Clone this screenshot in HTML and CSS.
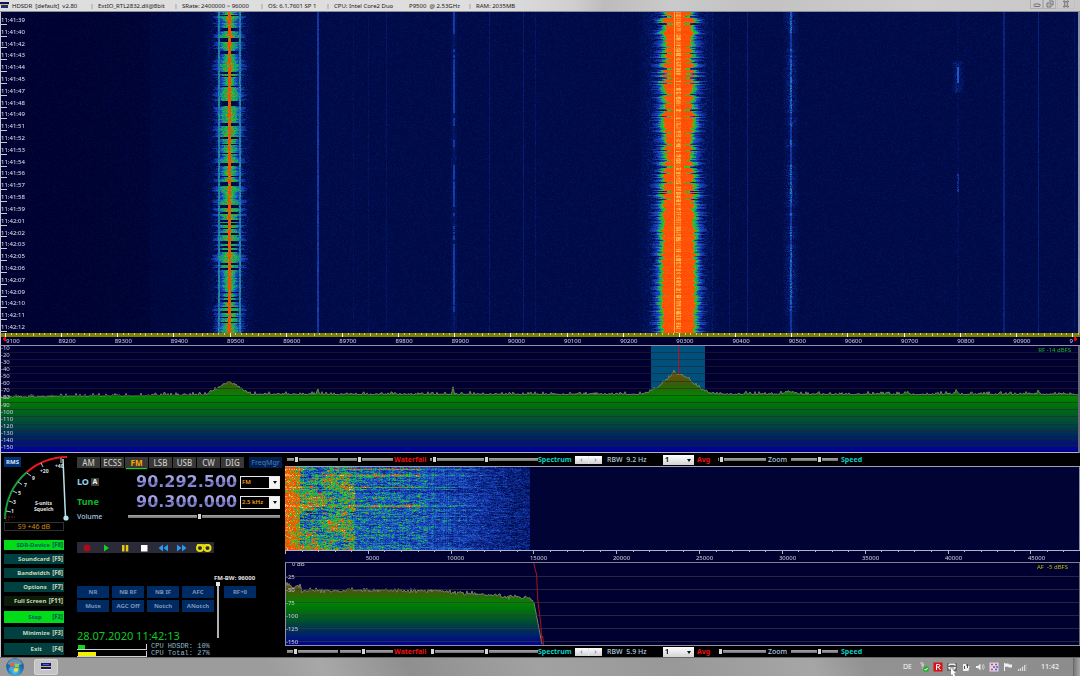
FILE: index.html
```html
<!DOCTYPE html>
<html lang="en">
<head>
<meta charset="utf-8">
<title>HDSDR</title>
<link rel="stylesheet" href="styles.css">
</head>
<body>
<div class="app">
  <header class="titlebar">
    <svg class="app-icon" viewBox="0 0 9 7"><rect width="9" height="3" fill="#101060"/><rect y="2" width="9" height="1" fill="#d8c820"/><rect x="1" y="3" width="7" height="3" fill="#183090"/></svg>
    <span class="t-name">HDSDR&nbsp; [default]&nbsp; v2.80</span><i>|</i>
    <span class="t-ext">ExtIO_RTL2832.dll@8bit</span><i>|</i>
    <span class="t-rate">SRate: 2400000 &gt; 96000</span><i>|</i>
    <span class="t-os">OS: 6.1.7601 SP 1</span><i>|</i>
    <span class="t-cpu">CPU: Intel Core2 Duo</span><span class="t-clk">P9500&nbsp; @ 2.53GHz</span><i>|</i>
    <span>RAM: 2035MB</span>
    <div class="winbtns">
      <button aria-label="Minimize window"><svg viewBox="0 0 8 8"><rect x="1" y="4" width="6" height="2.5" rx="1"/></svg></button>
      <button aria-label="Restore window"><svg viewBox="0 0 8 8"><path d="M3 1h4v4h-1M1 3h4v4h-4zM3 4.5v1"/></svg></button>
      <button aria-label="Close window"><svg viewBox="0 0 8 8"><path d="M1.500 1h1.500l1 1.500 1-1.500h1.500l-1.500 3 1.500 3h-1.500l-1-1.500-1 1.500h-1.500l1.500-3z"/></svg></button>
    </div>
  </header>

  <section class="rf-waterfall stack">
    <canvas id="rfWaterfall"></canvas>
    <ol class="times" id="times"></ol>
  </section>
  <section class="rf-scale stack">
    <canvas id="rfScale"></canvas>
    <div class="rf-labels" id="rfLabels"></div>
  </section>
  <section class="rf-spectrum stack">
    <canvas id="rfSpectrum"></canvas>
    <ol class="db db-rf" id="dbRf"></ol>
    <span class="level rf-level">RF -14 dBFS</span>
  </section>

  <div class="lower">
    <section class="panel">
      <div class="left">
        <div class="meter">
          <button class="rms">RMS</button>
          <svg viewBox="0 0 66 67">
            <path d="M2 64A62 62 0 0 1 24 17" fill="none" stroke="#18a040" stroke-width="2"/>
            <path d="M24 17A62 62 0 0 1 64 2" fill="none" stroke="#f01818" stroke-width="2"/>
            <path d="M3 56l5 1M6 46l4 1.500M10 36l4 2M15 27l4 2.500M24 18l4 3M38 8l2 4M58 3v5" stroke="#c8c8c8" stroke-width="1"/>
            <path d="M2 62h10M2 65h4" stroke="#901010" stroke-dasharray="2 1"/>
            <g class="dial"><text x="8" y="58">1</text><text x="10" y="49">3</text><text x="15" y="40">5</text><text x="21" y="32">7</text><text x="29" y="25">9</text><text x="37" y="18">+20</text><text x="52" y="13">+40</text><text x="32" y="50">S-units</text><text x="31" y="56">Squelch</text></g>
            <path d="M60 4L62.500 63" stroke="#b8e4ec" stroke-width="1.500"/><circle cx="63" cy="63" r="2.600" fill="#b8e4ec"/>
          </svg>
        </div>
        <output class="s-read">S9 +46 dB</output>
        <nav class="menu">
          <button class="on">SDR-Device <b>[F8]</b></button>
          <button>Soundcard <b>[F5]</b></button>
          <button>Bandwidth <b>[F6]</b></button>
          <button>Options <b class="wide">[F7]</b></button>
          <button class="dark">Full Screen <b>[F11]</b></button>
        </nav>
        <nav class="menu tall">
          <button class="on">Stop <b class="wide2">[F2]</b></button>
          <button>Minimize <b>[F3]</b></button>
          <button>Exit <b class="wide2">[F4]</b></button>
        </nav>
      </div>

      <div class="right">
        <div class="modes">
          <button>AM</button><button>ECSS</button><button class="active">FM</button><button>LSB</button><button>USB</button><button>CW</button><button>DIG</button>
          <button class="freqmgr">FreqMgr</button>
        </div>
        <div class="tune-row lo"><span class="t-label">LO <button class="vfo">A</button></span><output class="digits">90.292.500</output>
          <span class="combo"><select aria-label="Mode"><option>FM</option></select></span></div>
        <div class="tune-row tn"><span class="t-label">Tune</span><output class="digits">90.300.000</output>
          <span class="combo"><select aria-label="Step"><option>2.5 kHz</option></select></span></div>
        <div class="volume"><label for="vol">Volume</label><input id="vol" type="range" value="47"></div>
        <div class="transport">
          <button aria-label="Record"><svg viewBox="0 0 12 10"><circle cx="6" cy="5" r="3.600" fill="#a80c18"/></svg></button>
          <button aria-label="Play"><svg viewBox="0 0 12 10"><path d="M4 1.500L9 5l-5 3.500z" fill="#10d020"/></svg></button>
          <button aria-label="Pause"><svg viewBox="0 0 12 10"><path d="M3 2h2.500v6.500H3zM6.800 2h2.500v6.500H6.800z" fill="#e8c810"/></svg></button>
          <button aria-label="Stop playback"><svg viewBox="0 0 12 10"><path d="M3 2h6.500v6.500H3z" fill="#fff"/></svg></button>
          <button aria-label="Rewind"><svg viewBox="0 0 12 10"><path d="M6 1.500v7L1.500 5zM11 1.500v7L6.500 5z" fill="#2898f0"/></svg></button>
          <button aria-label="Forward"><svg viewBox="0 0 12 10"><path d="M1 1.500v7L5.500 5zM6 1.500v7L10.500 5z" fill="#2898f0"/></svg></button>
          <button class="loop" aria-label="Loop"><svg viewBox="0 0 18 10"><g fill="none" stroke="#e8e010" stroke-width="2"><circle cx="5" cy="5" r="3"/><circle cx="12.500" cy="5" r="3"/><path d="M2 2.200h12.500"/></g></svg></button>
        </div>
        <div class="dsp">
          <div class="dsp-main">
            <div class="fn"><button>NR</button><button>NB RF</button><button>NB IF</button><button>AFC</button><button>Mute</button><button>AGC Off</button><button>Notch</button><button>ANotch</button></div>
            <time class="clock">28.07.2020 11:42:13</time>
            <div class="cpu"><span class="bar"><span class="fill g" style="width:10%"></span></span><span>CPU HDSDR: 10%</span></div>
            <div class="cpu"><span class="bar"><span class="fill y" style="width:27%"></span></span><span>CPU Total: 27%</span></div>
          </div>
          <div class="dsp-side">
            <label for="bw">FM-BW: 96000</label>
            <div class="side-row"><input id="bw" class="vert" type="range" value="100"><button>RF+0</button></div>
          </div>
        </div>
      </div>
    </section>

    <section class="af">
      <div class="strip top">
        <input class="s1" aria-label="Waterfall low" type="range" value="16"><input class="s2" aria-label="Waterfall high" type="range" value="36">
        <b class="red wf">Waterfall</b>
        <input class="s3" aria-label="Spectrum low" type="range" value="4"><input class="s4" aria-label="Spectrum high" type="range" value="0">
        <b class="cyan sp">Spectrum</b>
        <span class="spin"><button aria-label="Narrower">‹</button><button aria-label="Wider">›</button></span>
        <span class="rbw">RBW&nbsp; 9.2 Hz</span>
        <span class="avg-box"><select aria-label="Averages RF"><option>1</option></select></span>
        <b class="red av">Avg</b>
        <input class="s5" aria-label="Zoom RF" type="range" value="3"><span class="zm">Zoom</span>
        <input class="s6" aria-label="Speed RF" type="range" value="62"><b class="cyan">Speed</b>
      </div>
      <div class="af-waterfall stack"><canvas id="afWaterfall"></canvas></div>
      <div class="af-scale stack"><canvas id="afScale"></canvas><div class="af-labels" id="afLabels"></div></div>
      <div class="af-spectrum stack">
        <canvas id="afSpectrum"></canvas>
        <ol class="db db-af" id="dbAf"></ol>
        <span class="level af-level">AF&nbsp; -5 dBFS</span>
      </div>
      <div class="strip bottom">
        <input class="s1" aria-label="AF waterfall low" type="range" value="12"><input class="s2" aria-label="AF waterfall high" type="range" value="44">
        <b class="red wf">Waterfall</b>
        <input class="s3" aria-label="AF spectrum low" type="range" value="0"><input class="s4" aria-label="AF spectrum high" type="range" value="0">
        <b class="cyan sp">Spectrum</b>
        <span class="spin"><button aria-label="Narrower AF">‹</button><button aria-label="Wider AF">›</button></span>
        <span class="rbw">RBW&nbsp; 5.9 Hz</span>
        <span class="avg-box"><select aria-label="Averages AF"><option>1</option></select></span>
        <b class="red av">Avg</b>
        <input class="s5" aria-label="Zoom AF" type="range" value="0"><span class="zm">Zoom</span>
        <input class="s6" aria-label="Speed AF" type="range" value="62"><b class="cyan">Speed</b>
      </div>
    </section>
  </div>

  <footer class="taskbar">
    <button class="start" aria-label="Start"><svg viewBox="0 0 22 20">
      <defs><radialGradient id="orb" cx=".5" cy=".75" r=".7"><stop offset="0" stop-color="#58d0f0"/><stop offset=".55" stop-color="#2078b8"/><stop offset="1" stop-color="#184878"/></radialGradient></defs>
      <circle cx="11" cy="10" r="9.800" fill="url(#orb)"/><path d="M2.500 7a9 9 0 0 1 17 0q-8 2-17 0z" fill="#a8d0e8" opacity=".5"/>
      <path d="M6 6q2.500-1.500 4.500-.3l-.7 3.800q-2.300-1-4.500.3z" fill="#e86828"/><path d="M11.300 6q2.200 1.200 4.700.2l-.8 3.700q-2.400 1-4.600-.2z" fill="#98d040"/><path d="M5 10.600q2.300-1.200 4.500-.2l-.7 3.800q-2.300-1-4.500.2z" fill="#48a8f0"/><path d="M10.400 10.800q2.200 1.200 4.600.2l-.7 3.700q-2.400 1-4.600-.2z" fill="#f8d838"/></svg></button>
    <button class="task" aria-label="HDSDR"><svg viewBox="0 0 10 8"><rect width="10" height="6" fill="#181870"/><rect y="3" width="10" height="1" fill="#c8b840"/><path d="M0 6.500h10" stroke="#e8e8f8"/><path d="M2 1.500h6" stroke="#5060c0"/></svg></button>
    <div class="tray">
      <span class="lang">DE</span>
      <svg viewBox="0 0 10 10"><path d="M1 1h3v6M2 3h3" stroke="#d8d8e0" fill="none"/><circle cx="7" cy="7" r="3" fill="#30b030"/><path d="M5.500 7l1.200 1.200L8.600 6" stroke="#fff" fill="none"/></svg>
      <svg viewBox="0 0 10 10"><rect x=".5" y=".5" width="9" height="9" fill="#d81018"/><path d="M3.500 8V2.500h2q2 .2 1.500 1.500-.3 1-2 1h-1.500M5 5l2.500 3" fill="none" stroke="#fff"/></svg>
      <svg viewBox="0 0 10 10"><rect y="1" width="10" height="8" fill="#686868"/><path d="M2 1.500h6l1 2H1zM1 5h8l-1 2.500H2z" fill="#f0f0f0"/><path d="M3 3.500h4M3 6h4" stroke="#606060" stroke-width=".8"/></svg>
      <svg viewBox="0 0 10 10"><path d="M2 2h3v7H2zM5 4h3.500L7.500 9H5z" fill="#f0f0f0"/><path d="M3.500 4v3M6.500 2v4" stroke="#505050"/></svg>
      <svg viewBox="0 0 10 10"><path d="M1 4h2l2.500-2.500v7L3 6H1z" fill="#f0f0f0"/><path d="M7 3q1.500 2 0 4M8.300 2q2 3 0 6" fill="none" stroke="#d8d8d8" stroke-width=".8"/></svg>
      <svg viewBox="0 0 10 10"><rect x=".5" y=".5" width="9" height="9" fill="#e0d0e8"/><path d="M2 2.500h2M6 2.500h2M2 7.500h2" stroke="#d04868" stroke-width="1.500"/><path d="M4 5h2M7 5h2M6 7.500h2" stroke="#5060c0" stroke-width="1.500"/></svg>
      <svg viewBox="0 0 10 10"><path d="M1.500 1v8" stroke="#f0f0f0"/><path d="M2 1.500h3.500l.5 1h3v3H6L5 4.800H2z" fill="#f0f0f0"/></svg>
      <svg viewBox="0 0 10 10"><path d="M1 7h1.200v2H1zM3 6h1.200v3H3zM5 4.500h1.200V9H5zM7 3h1.200v6H7z" fill="#d8d8d8"/><path d="M9 1.500v7.500" stroke="#b0b0b0" stroke-width=".8"/></svg>
      <time>11:42</time>
      <button class="show" aria-label="Show desktop"></button>
      <svg class="cursor" viewBox="0 0 7 8"><path d="M1 0l5 5H4l1 3H3L2.500 6 1 7z" fill="#fff"/></svg>
    </div>
  </footer>
</div>
<script src="script.js"></script>
</body>
</html>
```
FILE: styles.css
```css
* { box-sizing: border-box; }
body { margin: 0; background: #000; font: 6px/8px "Noto Sans", "Open Sans", sans-serif; }
button, select, input, output { font: inherit; margin: 0; padding: 0; border: 0; border-radius: 0; color: inherit; }
button { display: block; background: none; text-align: center; white-space: nowrap; overflow: hidden; }
ol { list-style: none; margin: 0; padding: 0; }
svg { display: block; }
.app { display: flex; flex-direction: column; height: 100vh; min-height: 560px; min-width: 900px; overflow: hidden; }
.stack { display: grid; grid-template: minmax(0, 1fr) / minmax(0, 1fr); overflow: hidden; }
.stack > * { grid-area: 1 / 1; min-height: 0; }
.stack > canvas { width: 100%; height: 100%; display: block; }

/* title bar */
.titlebar { flex: 0 0 12px; display: flex; align-items: center; color: #202020; background: linear-gradient(100deg, #dedede 0 46%, #cfcfcf 53%, #bcbcbc 56%, #cacaca 62%, #c2c2c2 70%, #cdcdcd 85%, #c8c8c8); border-bottom: 1px solid #8c8c94; white-space: nowrap; }
.titlebar i { font-style: normal; width: 12px; text-align: center; color: #606060; }
.app-icon { width: 9px; height: 7px; margin-right: 3px; }
.t-name { width: 74px; }
.t-ext { width: 72px; }
.t-rate { width: 74px; }
.t-os { width: 54px; }
.t-cpu { width: 75px; }
.t-clk { width: 55px; }
.winbtns { margin-left: auto; display: flex; align-self: flex-start; padding-right: 5px; }
.winbtns button { width: 13px; height: 9px; border: 1px solid #b0b0b0; border-top: 0; padding: 0 2px; }
.winbtns button:last-child { width: 18px; padding: 0 4px; margin-left: 1px; border-color: #c0c0c0; }
.winbtns svg { width: 8px; height: 8px; fill: none; stroke: #707078; stroke-width: 1; }

/* RF displays */
.rf-waterfall { flex: 1 1 0; min-height: 0; border-left: 1px solid #c8c8d0; border-right: 2px solid #8890a8; }
.times { display: flex; flex-direction: column; color: #e4e4f4; padding-top: 2px; position: relative; }
.times li { flex: 1 1 0; display: flex; align-items: center; min-height: 0; background: linear-gradient(#c8c8d8, #c8c8d8) left 0 bottom 1px / 6px 1px no-repeat; }
.rf-scale { flex: 0 0 13px; border-bottom: 1px solid #9090a0; border-left: 1px solid #c8c8d0; background: #000030; }
.rf-labels { display: grid; grid-template-columns: 38px repeat(18, 1fr) 30px; align-items: end; color: #d0d0e4; text-align: center; line-height: 8px; position: relative; }
.rf-labels span:first-child { text-align: left; padding-left: 5px; }
.rf-labels span:last-child { text-align: right; padding-right: 7px; }
.rf-spectrum { flex: 0 0 107px; border-bottom: 1px solid #b0b0c8; border-left: 1px solid #c8c8d0; border-right: 2px solid #686878; background: #000030; position: relative; }
.db { display: flex; flex-direction: column; color: #d0d0e4; position: relative; }
.db li { flex: 1 1 0; min-height: 0; display: flex; align-items: center; }
.db-rf { margin: -2px 0 -6px; }
.level { justify-self: end; align-self: start; position: relative; }
.rf-level { color: #18b828; padding-right: 7px; }
.af-level { color: #b8b808; padding-right: 11px; }

.lower { flex: 0 0 204px; min-height: 0; display: flex; background: #000; }

/* control panel */
.panel { flex: 0 0 285px; display: flex; border-left: 1px solid #c8c8d0; padding-left: 2px; }
.left { width: 62px; flex: none; }
.meter { position: relative; height: 69px; padding-top: 2px; }
.meter svg { width: 66px; height: 67px; overflow: visible; }
.dial { fill: #e4e4e4; font-size: 5px; font-weight: bold; }
.rms { position: absolute; left: 1px; top: 4px; width: 17px; height: 10px; background: #003078; color: #d8e4f4; font-weight: bold; line-height: 10px; }
.s-read { display: block; margin-left: 1px; width: 60px; height: 9px; border: 1px solid #303030; color: #d08810; font-size: 7px; line-height: 7px; text-align: center; }
.menu { display: flex; flex-direction: column; gap: 4px; margin: 9px 0 0 1px; }
.menu button { height: 10px; width: 60px; background: #004040; color: #c8d8b8; font-weight: bold; line-height: 10px; text-align: right; padding-right: 1px; }
.menu b { color: #b8c0a4; margin-left: 1px; }
.menu .wide { margin-left: 4px; }
.menu .wide2 { margin-left: 9px; }
.menu .on { background: #00dc18; color: #005868; }
.menu .on b { color: #006850; }
.menu .dark { background: #0c1c08; }
.menu.tall { margin-top: 5px; }
.tall button { height: 12px; line-height: 12px; }
.right { flex: 1; min-width: 0; margin-left: 12px; display: flex; flex-direction: column; }
.modes { display: flex; gap: 1px; padding-top: 4px; height: 19px; }
.modes button { width: 23px; height: 11px; background: #383838; color: #c8c8c8; font-size: 8px; line-height: 11px; font-weight: 500; }
.modes .active { color: #ffa800; font-weight: bold; box-shadow: 0 2px 1px -1px #20d020; }
.modes .freqmgr { width: 33px; margin-left: 4px; background: #002054; color: #4870a8; font-size: 7px; }
.tune-row { display: flex; align-items: center; height: 20px; }
.t-label { width: 55px; display: flex; align-items: center; gap: 2px; }
.lo .t-label { color: #98d0f0; font-size: 9px; font-weight: bold; }
.tn .t-label { color: #10b828; font-size: 9px; font-weight: bold; }
.vfo { width: 8px; height: 8px; background: #404040; color: #f0f0f0; font: bold 7px/8px "Noto Sans", sans-serif; }
.digits { width: 108px; padding-left: 4px; font: bold 16px/18px "DejaVu Sans", sans-serif; color: transparent; background: linear-gradient(#a4a4e4 20%, #8c8cd4 48%, #6464b0 52%, #9494dc 80%); -webkit-background-clip: text; background-clip: text; }
.combo { position: relative; width: 40px; height: 13px; }
.combo::after, .avg-box::after { content: ""; position: absolute; right: 3px; top: 5px; border: 2px solid transparent; border-top: 3px solid #101010; border-bottom: 0; pointer-events: none; }
.combo select { display: block; width: 100%; height: 13px; appearance: none; background: linear-gradient(90deg, #000 0 28px, #f4f4f4 28px); border: 1px solid #e8e8e8; color: #f8a010; padding-left: 1px; line-height: 11px; font-weight: 600; }
.volume { display: flex; align-items: center; height: 9px; color: #a8c8e0; font-size: 7px; font-weight: 500; }
.volume label { width: 51px; }
.volume input { width: 152px; }
input[type=range] { appearance: none; -webkit-appearance: none; background: none; height: 7px; display: block; min-width: 0; }
input[type=range]::-webkit-slider-runnable-track { height: 3px; background: linear-gradient(#a8a8a8, #707070); }
input[type=range]::-webkit-slider-thumb { -webkit-appearance: none; width: 5px; height: 5px; margin-top: -1px; background: #d8d8d8; border: solid #000; border-width: 0 1px; }
.transport { display: flex; align-items: center; margin-top: 21px; width: 137px; height: 11px; background: #2a2a38; padding-left: 4px; }
.transport button { width: 19px; }
.transport svg { width: 12px; height: 10px; }
.transport .loop svg { width: 18px; }
.dsp { display: flex; margin-top: 20px; flex: 1; min-height: 0; }
.dsp-main { width: 137px; padding-top: 13px; }
.fn { display: grid; grid-template-columns: repeat(4, 32px); gap: 2px 3px; margin-bottom: 18px; }
.fn button, .side-row button { width: 32px; height: 12px; background: #002a64; color: #7c94b4; font-weight: bold; line-height: 12px; }
.clock { display: block; font-size: 11px; line-height: 12px; color: #10c820; white-space: nowrap; margin-bottom: 1px; }
.cpu { display: flex; align-items: center; gap: 4px; font: 7px/7px "Liberation Mono", monospace; color: #90b8c8; white-space: nowrap; }
.bar { width: 70px; height: 6px; border: solid #d0d0d0; border-width: 0 1px 1px 0; padding: 1px 0 0 1px; }
.fill { display: block; height: 4px; }
.g { background: #10d818; }
.y { background: #f0f000; }
.dsp-side label { display: block; color: #e0e0e0; font-weight: bold; margin-top: 1px; white-space: nowrap; }
.side-row { display: flex; align-items: flex-start; gap: 3px; }
.side-row button { margin-top: 4px; }
input[type=range].vert { writing-mode: vertical-lr; direction: rtl; width: 7px; height: 56px; }
input[type=range].vert::-webkit-slider-runnable-track { width: 2px; height: 100%; background: #b0b0b0; }
input[type=range].vert::-webkit-slider-thumb { width: 4px; height: 4px; margin: 0 0 0 -1px; background: #e8e8e8; border: 0; }

/* audio displays */
.af { flex: 1; min-width: 0; display: flex; flex-direction: column; }
.strip { display: flex; align-items: center; padding-left: 2px; color: #b0cce4; font-size: 7px; line-height: 9px; font-weight: 500; white-space: nowrap; }
.strip.top { flex: 0 0 14px; border-bottom: 1px solid #a0a0b8; }
.strip.bottom { flex: 0 0 12px; border-top: 1px solid #9090a0; }
.red { color: #f01010; }
.cyan { color: #08d0c8; }
.s1 { width: 51px; margin-right: 2px; }
.s2 { width: 53px; margin-right: 1px; }
.wf { width: 36px; }
.s3 { width: 54px; }
.s4 { width: 54px; }
.sp { width: 37px; }
.spin { display: flex; width: 27px; height: 8px; background: #e4e4e4; color: #5868b0; gap: 1px; }
.spin button { flex: 1; line-height: 7px; background: linear-gradient(#fff, #d0d0d0); }
.rbw { margin-left: 5px; width: 56px; }
.avg-box { position: relative; width: 31px; height: 10px; margin-right: 3px; }
.avg-box::after { top: 4px; }
.avg-box select { display: block; appearance: none; width: 100%; height: 10px; background: linear-gradient(#fff, #d4d4d4); color: #101010; padding-left: 2px; font-weight: bold; line-height: 10px; }
.av { width: 21px; }
.s5 { width: 48px; margin-right: 2px; }
.zm { width: 23px; }
.s6 { width: 47px; margin-right: 3px; }
.af-waterfall { flex: 1 1 0; min-height: 0; border-right: 1px solid #8890a8; background: #000030; }
.af-scale { flex: 0 0 13px; border-bottom: 1px solid #808088; background: #000030; }
.af-labels { position: relative; display: grid; grid-template-columns: 46px repeat(9, 1fr) 2px; align-items: end; color: #d0d0e4; text-align: center; }
.af-spectrum { flex: 0 0 82px; background: #000030; border-left: 1px solid #9090a8; border-right: 1px solid #686878; }
.db-af { margin: -6px 0 -3px; }
.db-af li:first-child { padding-left: 6px; }

/* task bar */
.taskbar { flex: 0 0 19px; min-height: 0; display: flex; align-items: center; background: linear-gradient(65deg, #9c9c9c 0 25%, #a8a8a8 30%, #8f8f8f 38%, #a2a2a2 50%, #989898 62%, #a6a6a6 75%, #929292 80%, #8c8c8c); border-top: 1px solid #686868; }
.start { width: 22px; height: 18px; margin-left: 4px; }
.start svg { width: 22px; height: 18px; }
.task { width: 24px; height: 16px; margin-left: 8px; background: #c4c4c4; border: 1px solid #d4d4d4; border-radius: 2px; }
.task svg { width: 10px; height: 8px; margin: 0 auto; }
.tray { position: relative; margin-left: auto; display: flex; align-items: center; gap: 4px; color: #f4f4f4; height: 18px; }
.tray > svg { width: 10px; height: 10px; }
.lang { width: 12px; font-size: 7px; }
.tray time { width: 32px; text-align: right; font-size: 7px; margin-right: 6px; padding-right: 4px; font-weight: 500; }
.show { width: 7px; height: 18px; background: linear-gradient(90deg, #787878, #a8a8a8); border-left: 1px solid #686868; }
.tray .cursor { position: absolute; left: 47px; bottom: 0; width: 7px; height: 8px; }
```
FILE: script.js
```js
let seed = 20207;
function rnd() {
  seed = (seed * 1664525 + 1013904223) >>> 0;
  return seed / 4294967296;
}
function gauss() { return (rnd() + rnd() + rnd() - 1.5) * 1.2; }

const STOPS = [
  [0, 0, 0, 44], [0.15, 0, 14, 80], [0.35, 16, 48, 156], [0.52, 36, 92, 210],
  [0.6, 20, 150, 130], [0.7, 40, 190, 44], [0.77, 110, 190, 20], [0.8, 255, 68, 0],
  [0.92, 255, 92, 14], [1, 255, 190, 80]
];
function colour(t) {
  t = Math.max(0, Math.min(1, t));
  let i = 1;
  while (i < STOPS.length - 1 && STOPS[i][0] < t) i++;
  const a = STOPS[i - 1], b = STOPS[i], f = (t - a[0]) / (b[0] - a[0]);
  return [1, 2, 3].map(k => a[k] + (b[k] - a[k]) * f);
}
function prepare(id) {
  const c = document.getElementById(id);
  c.width = c.clientWidth;
  c.height = c.clientHeight;
  return [c.getContext('2d'), c.width, c.height];
}
function paint(ctx, w, h, fn) {
  const img = ctx.createImageData(w, h);
  for (let y = 0; y < h; y++) {
    const row = fn(y);
    for (let x = 0; x < w; x++) {
      const c = colour(row(x)), i = (y * w + x) * 4;
      img.data[i] = c[0]; img.data[i + 1] = c[1]; img.data[i + 2] = c[2]; img.data[i + 3] = 255;
    }
  }
  ctx.putImageData(img, 0, 0);
}

/* RF waterfall: carriers are given in units of a 1080 wide span */
function rfWaterfall() {
  const [ctx, w, h] = prepare('rfWaterfall');
  const k = 1080 / (w + 3);
  const lines = [[317.5, 0.26], [353, 0.04], [368, 0.05], [386, 0.07], [489, 0.09], [523, 0.1], [535, 0.07],
    [712, 0.06], [729, 0.08], [747, 0.13], [1003.5, 0.14], [1038, 0.14], [1074, 0.06], [110, 0.02]];
  let m1 = 0.5, m2 = 0.5, m3 = 0.5, quiet = false;
  paint(ctx, w, h, y => {
    m1 = m1 * 0.85 + rnd() * 0.15; m2 = m2 * 0.8 + rnd() * 0.2; m3 = m3 * 0.9 + rnd() * 0.1;
    const v = y / h;
    quiet = quiet ? rnd() < 0.45 : rnd() < 0.16;
    const swell = Math.max(0, Math.min(1, (m1 - 0.34) * 3));
    const g = quiet ? 2 : 3 + swell * 8 + rnd() * 2.5;
    const b = g + 4 + rnd() * 5;
    const solid = rnd() < swell ? 0.25 : 0.08;
    const narrow = v < 0.6 && rnd() < 0.16;
    const o = (narrow ? 5 : v < 0.62 ? 7 + m2 * 10 : 11 + m2 * 6) + rnd() * 3;
    const gr = o + 2 + rnd() * 4, bl = gr + 2 + rnd() * 8;
    const streak = rnd() * 0.09;
    const beat = m3 > 0.48;
    return px => {
      const x = (px + 1) * k;
      let t = 0.05 + 0.075 * Math.min(1, Math.max(0, (x - 60) / 260)) + gauss() * 0.04;
      if (x < 150) t -= 0.025;
      for (const l of lines) if (Math.abs(x - l[0]) < 0.6) t += l[1] * (0.8 + rnd() * 0.3);
      const d1 = Math.abs(x - 229);
      if (d1 < 28) {
        if (d1 < 1.1) t = rnd() < 0.15 ? 0.73 : 0.82;
        else if (d1 < g * 0.5 && rnd() < solid) t = 0.79;
        else if (d1 < g) t = 0.72 - 0.14 * d1 / g + gauss() * 0.06;
        else if (Math.abs(d1 - 10.5) < 0.6) t = 0.5 + rnd() * 0.14;
        else if (d1 < b) t = (quiet ? 0.08 : 0.44 - 0.2 * (d1 - g) / (b - g)) + rnd() * 0.1;
        else t += 0.3 * (1 - d1 / 28) * rnd();
      }
      const d2 = Math.abs(x - 678);
      if (d2 < 42) {
        if (Math.abs(x - 674) < 0.6) t = 0.985;
        else if (d2 < 2.5) t = 0.88 + streak + rnd() * 0.05;
        else if (d2 < o) t = 0.81 + streak * 0.5 + rnd() * 0.07;
        else if (narrow && Math.abs(d2 - 10) < 1.5) t = 0.72;
        else if (d2 < gr) t = 0.74 - 0.14 * (d2 - o) / (gr - o) + gauss() * 0.03;
        else if (d2 < bl) t = 0.5 - 0.22 * (d2 - gr) / (bl - gr) + gauss() * 0.05;
        else t += 0.34 * (1 - d2 / 42) * rnd();
      }
      const d3 = Math.abs(x - 790.5);
      if (d3 < 1) t += 0.22 + (beat ? rnd() * 0.26 : 0.02);
      else if (d3 < 8) t += 0.2 * rnd() * (1 - d3 / 9) * (beat ? 1.2 : 0.6);
      const d4 = Math.abs(x - 453.5);
      if (d4 < 0.6) t += beat ? 0.26 : 0.08;
      else if (d4 < 3) t += 0.04;
      const d5 = Math.abs(x - 957.5);
      if (v > 0.15 && v < 0.25) {
        if (d5 < 0.6 && v > 0.17 && v < 0.22) t += 0.36;
        else if (d5 < 7) t += 0.22 * rnd() * (1 - d5 / 7);
      } else if (d5 < 0.6) t += (v > 0.5 && v < 0.56 ? 0.3 : 0.06) * rnd();
      return t;
    };
  });
}

/* AF waterfall: 48 kHz span, programme audio up to 15 kHz */
function afWaterfall() {
  const [ctx, w, h] = prepare('afWaterfall');
  const cols = Array.from({ length: w }, () => gauss() * 0.04);
  const bright = [2, 8, 9, 20, 38, 39];
  paint(ctx, w, h, y => {
    const rowGain = gauss() * 0.07;
    const burst = bright.includes(y);
    const loud = (y > 10 && y < 44) || y > 52;
    let hold = 0;
    return px => {
      const f = px / w * 48000;
      if (f > 14800) return 0.025 + rnd() * 0.02;
      hold = hold * 0.55 + gauss() * 0.5;
      let t;
      if (f < 900) t = 0.88 - f / 7000 + gauss() * 0.1;
      else if (f < 4200) t = (loud ? 0.65 : 0.56) + hold * 0.3 + 0.08 * Math.sin(px / 8 + Math.sin(y / 7) * 2);
      else if (f < 8500) t = 0.52 - (f - 4200) / 90000 + hold * 0.24;
      else t = 0.47 - (f - 8500) / 26000 + hold * 0.18;
      t += (f < 11000 ? cols[px] : 0) + rowGain * (f < 12000 ? 1 : 0.4) + gauss() * 0.06;
      if (burst && f > 3800 && f < 8200) t += 0.24;
      else if (burst && f < 11500) t += 0.1;
      return Math.max(0.05, t);
    };
  });
}

function shape(ctx, w, h, points, stops, outline) {
  const grad = ctx.createLinearGradient(0, 0, 0, h);
  stops.forEach(s => grad.addColorStop(s[0] / h, s[1]));
  ctx.beginPath();
  ctx.moveTo(0, h);
  points.forEach(p => ctx.lineTo(p[0], p[1]));
  ctx.lineTo(points[points.length - 1][0], h);
  ctx.fillStyle = grad;
  ctx.fill();
  ctx.beginPath();
  points.forEach((p, i) => i ? ctx.lineTo(p[0], p[1]) : ctx.moveTo(p[0], p[1]));
  ctx.strokeStyle = outline;
  ctx.lineWidth = 1;
  ctx.stroke();
}
function gridLines(ctx, w, first, step, h, style) {
  ctx.fillStyle = style;
  for (let y = first; y < h; y += step) ctx.fillRect(0, Math.round(y), w, 1);
}

function rfSpectrum() {
  const [ctx, w, h] = prepare('rfSpectrum');
  const s = (w + 3) / 1080;
  ctx.fillStyle = '#000030';
  ctx.fillRect(0, 0, w, h);
  ctx.fillStyle = '#00507e';
  ctx.fillRect(Math.round(650 * s), 0, Math.round(54 * s), h);
  const peak = (x, c, half, height) => Math.max(0, 1 - Math.abs(x - c) / half) * height;
  const pts = [];
  for (let px = 0; px <= w; px++) {
    const x = (px + 1) / s;
    let y = 51 - 3 * Math.min(1, x / 240) - Math.pow(rnd(), 4) * 3 + rnd();
    const hump = peak(x, 229, 22, 13);
    const main = 20 * Math.exp(-Math.pow((x - 678) / 20, 2));
    y -= hump + main + peak(x, 317.5, 1.5, 5) + peak(x, 453, 1.5, 8) + peak(x, 790, 12, 3)
      + peak(x, 957, 3, 3) + peak(x, 1038, 2, 4) + peak(x, 674, 2, 5) + peak(x, 746, 2, 3);
    pts.push([px, y]);
  }
  shape(ctx, w, h, pts, [[0, '#804010'], [28, '#6c5008'], [38, '#385c08'], [50, '#008400'],
    [62, '#006c10'], [78, '#004840'], [92, '#002060'], [h, '#000094']], '#70805c');
  gridLines(ctx, w, 6, 7.15, h, 'rgba(40,36,40,.55)');
  ctx.fillStyle = '#c01020';
  ctx.fillRect(Math.round(677 * s), 0, 1, 28);
}

function afSpectrum() {
  const [ctx, w, h] = prepare('afSpectrum');
  const s = w / 794;
  ctx.fillStyle = '#000030';
  ctx.fillRect(0, 0, w, h);
  const pts = [];
  for (let px = 0; px <= 257 * s; px++) {
    const x = px / s;
    let y = x < 16 ? 23 : x < 150 ? 27.5 : 27.5 + (x - 150) * 0.085;
    y += gauss() * (x < 16 ? 4 : 2);
    if (x > 248) y = 38 + (x - 248) * 5.2;
    pts.push([px, Math.min(h, y)]);
  }
  shape(ctx, w, h, pts, [[0, '#804010'], [22, '#6c4c08'], [30, '#3c5c08'], [40, '#008400'],
    [52, '#006418'], [66, '#003450'], [h, '#000094']], '#788068');
  gridLines(ctx, w, 13, 13, h, 'rgba(52,56,72,.7)');
  ctx.beginPath();
  [[248, 0], [251, 12], [252, 36], [255, 60], [256, 76], [257, 73], [258, 82]]
    .forEach((p, i) => i ? ctx.lineTo(p[0] * s, p[1]) : ctx.moveTo(p[0] * s, p[1]));
  ctx.strokeStyle = '#b01020';
  ctx.stroke();
}

function rfScale() {
  const [ctx, w] = prepare('rfScale');
  ctx.fillStyle = '#808000';
  ctx.fillRect(0, 0, w, 4);
  const step = (w - 68) / 18;
  for (let i = -12; i < 190; i++) {
    const x = Math.round(38 + step / 2 - 6 + (i * step) / 10);
    ctx.fillStyle = i % 10 === 0 ? '#ffffff' : '#d0d090';
    ctx.fillRect(x, 0, 1, i % 10 === 0 ? 4 : i % 5 === 0 ? 3 : 2);
  }
  ctx.fillStyle = '#f00000';
  ctx.fillRect(3, 4, 2, 4);
  ctx.fillRect(2, 5, 1, 2);
  ctx.fillRect(w - 6, 4, 2, 4);
  ctx.fillRect(w - 4, 5, 1, 2);
}
function afScale() {
  const [ctx, w] = prepare('afScale');
  ctx.fillStyle = '#b0b0c8';
  ctx.fillRect(0, 0, w, 1);
  for (let i = 0; i <= 48; i++) ctx.fillRect(Math.round(i * w / 48), 0, 1, i % 5 === 0 ? 4 : 2);
}

function fill(id, tag, items) {
  const host = document.getElementById(id);
  items.forEach(v => {
    const el = document.createElement(tag);
    el.textContent = v;
    host.appendChild(el);
  });
}
const secs = ['41:39', '41:40', '41:42', '41:43', '41:44', '41:45', '41:47', '41:48', '41:49', '41:51',
  '41:52', '41:53', '41:54', '41:56', '41:57', '41:58', '41:59', '42:01', '42:02', '42:03', '42:05',
  '42:06', '42:07', '42:09', '42:10', '42:11', '42:12'];
fill('times', 'li', secs.map(v => '11:' + v));
fill('rfLabels', 'span', ['9100', ...Array.from({ length: 18 }, (_, i) => 89200 + i * 100), '9']);
fill('dbRf', 'li', Array.from({ length: 16 }, (_, i) => -10 - i * 10));
fill('afLabels', 'span', ['', ...Array.from({ length: 9 }, (_, i) => 5000 + i * 5000)]);
fill('dbAf', 'li', ['0 dB', -25, -50, -75, -100, -125, -150]);

function drawAll() {
  seed = 20207;
  rfWaterfall();
  rfScale();
  rfSpectrum();
  afWaterfall();
  afScale();
  afSpectrum();
}
drawAll();
window.addEventListener('resize', drawAll);
```
